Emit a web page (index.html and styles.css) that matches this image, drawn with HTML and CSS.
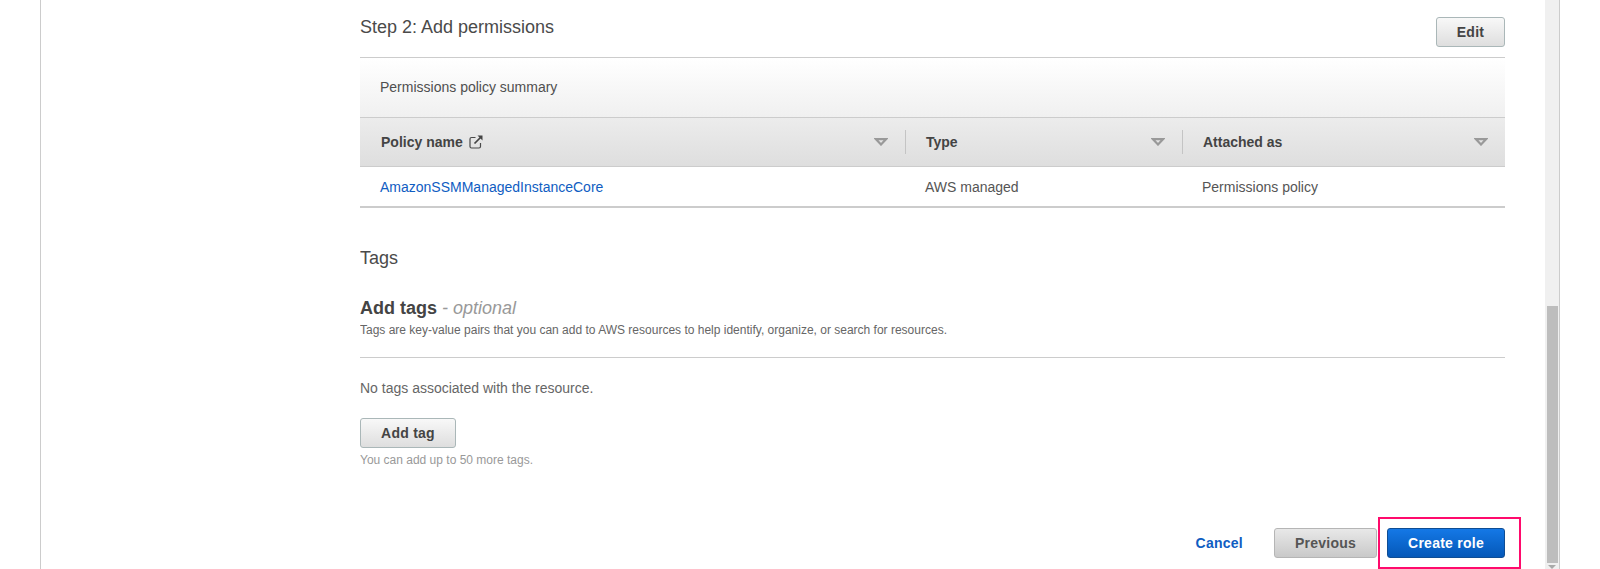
FILE: index.html
```html
<!DOCTYPE html>
<html lang="en">
<head>
<meta charset="utf-8">
<title>Create role</title>
<link rel="stylesheet" href="styles.css">
</head>
<body>
<div class="page">
  <main class="frame">
    <section class="content">
      <header class="step-head">
        <h2 class="step-title">Step 2: Add permissions</h2>
        <button class="btn btn-edit">Edit</button>
      </header>
      <div class="summary">Permissions policy summary</div>
      <div class="thead">
        <div class="th th-name">
          <span class="th-label">Policy name
            <svg class="ext" viewBox="0 0 14 14" width="14" height="14" aria-hidden="true"><path d="M6.500 2.500H2.500A1.500 1.500 0 0 0 1 4v7.500A1.500 1.500 0 0 0 2.500 13H10a1.500 1.500 0 0 0 1.500-1.500V8" fill="none" stroke="#4a4a4a" stroke-width="1.200"/><path d="M5.500 8.500 12 2" fill="none" stroke="#444" stroke-width="1.700"/><path d="M8.500 .5H13.500V5.500z" fill="#444"/></svg>
          </span>
          <svg class="caret" viewBox="0 0 14 8" width="14" height="8" aria-hidden="true"><path d="M1.800 1.100h10.400L7 6.500z" fill="none" stroke="#999" stroke-width="2.200"/></svg>
        </div>
        <div class="th th-type">
          <span class="th-label">Type</span>
          <svg class="caret" viewBox="0 0 14 8" width="14" height="8" aria-hidden="true"><path d="M1.800 1.100h10.400L7 6.500z" fill="none" stroke="#999" stroke-width="2.200"/></svg>
        </div>
        <div class="th th-attached">
          <span class="th-label">Attached as</span>
          <svg class="caret" viewBox="0 0 14 8" width="14" height="8" aria-hidden="true"><path d="M1.800 1.100h10.400L7 6.500z" fill="none" stroke="#999" stroke-width="2.200"/></svg>
        </div>
      </div>
      <div class="trow">
        <a class="td td-name link" href="#">AmazonSSMManagedInstanceCore</a>
        <div class="td td-type">AWS managed</div>
        <div class="td td-attached">Permissions policy</div>
      </div>

      <h2 class="tags-title">Tags</h2>
      <h3 class="add-title">Add tags <em class="optional">- optional</em></h3>
      <p class="desc">Tags are key-value pairs that you can add to AWS resources to help identify, organize, or search for resources.</p>
      <hr class="rule">
      <p class="none">No tags associated with the resource.</p>
      <button class="btn btn-add">Add tag</button>
      <p class="limit">You can add up to 50 more tags.</p>

      <footer class="actions">
        <a class="cancel" href="#">Cancel</a>
        <button class="btn btn-prev">Previous</button>
        <button class="btn btn-primary">Create role</button>
      </footer>
    </section>
    <div class="highlight"></div>
  </main>
  <aside class="scrollbar">
    <div class="thumb"></div>
    <svg class="arrow" viewBox="0 0 8 4" width="8" height="4" aria-hidden="true"><path d="M0 0h8L4 4z" fill="#a9a9a9"/></svg>
  </aside>
</div>
</body>
</html>
```
FILE: styles.css
```css
* { box-sizing: border-box; }
html, body { margin: 0; height: 569px; overflow: hidden; background: #fff; }
body { font-family: "Liberation Sans", Arial, sans-serif; font-size: 14px; color: #444; }

.page { display: flex; height: 569px; padding-left: 40px; }
.frame { position: relative; flex: 1; border-left: 1px solid #ccc; padding-left: 319px; padding-right: 40px; }
.content { height: 569px; overflow: hidden; }

.step-head { display: flex; justify-content: space-between; height: 57px; padding-top: 17px; }
.step-title { margin: 0; font-size: 18px; font-weight: 400; line-height: 21px; color: #4a4a4a; }

.btn { display: block; height: 30px; padding: 0; border: 1px solid #aab7b8; border-radius: 3px; font: 700 14px/28px "Liberation Sans", Arial, sans-serif; letter-spacing: .25px; color: #444; text-align: center; background: linear-gradient(#f8f8f8, #dedede); }
.btn-edit { width: 69px; }
.btn-add { width: 96px; }
.btn-prev { width: 103px; background: linear-gradient(#e8e8e8, #c9c9c9); border-color: #b5b5b5; color: #555; }
.btn-primary { width: 118px; margin-left: 10px; color: #fff; border-color: #0f4d94; background: linear-gradient(#1478e6, #0558b8); }

.summary { height: 61px; border-top: 1px solid #ccc; border-bottom: 1px solid #ccc; padding: 21px 20px 0; line-height: 17px; background: linear-gradient(#fff, #f0f0f0); color: #4f4f4f; }
.thead { display: grid; grid-template-columns: 546px 277px 1fr; align-items: center; height: 49px; border-bottom: 1px solid #ccc; background: linear-gradient(#ececec, #dedede); }
.th { position: relative; display: flex; justify-content: space-between; align-items: center; height: 24px; font-weight: 700; }
.th-label { display: flex; align-items: center; gap: 6px; }
.th-name { padding: 0 17px 0 21px; border-right: 1px solid #c4c4c4; }
.th-type { padding: 0 17px 0 20px; border-right: 1px solid #c4c4c4; }
.th-attached { padding: 0 17px 0 20px; }

.trow { display: grid; grid-template-columns: 545px 277px 1fr; align-items: center; height: 41px; border-bottom: 2px solid #ccc; }
.td { padding-left: 20px; }
.td-type, .td-attached { color: #555; }
.link { color: #0f5dc2; text-decoration: none; }

.tags-title { margin: 40px 0 0; font-size: 18px; font-weight: 400; line-height: 21px; color: #4a4a4a; }
.add-title { margin: 29px 0 0; font-size: 18px; font-weight: 700; line-height: 21px; color: #444; }
.optional { font-weight: 400; color: #999; }
.desc { margin: 4px 0 0; font-size: 12px; line-height: 14px; color: #666; }
.rule { height: 1px; margin: 20px 0 0; border: 0; background: #ccc; }
.none { margin: 22px 0 0; line-height: 17px; color: #666; }
.btn-add { margin-top: 21px; }
.limit { margin: 5px 0 0; font-size: 12px; line-height: 14px; color: #999; }

.actions { display: flex; justify-content: flex-end; align-items: center; margin-top: 61px; }
.cancel { margin-right: 31px; font-weight: 700; letter-spacing: .25px; color: #0f5dc2; text-decoration: none; }

.highlight { position: absolute; left: 1337px; top: 517px; width: 143px; height: 52px; border: 2px solid #ff0a6c; pointer-events: none; }

.scrollbar { position: relative; flex: 0 0 15px; width: 15px; background: #f0f0f0; border-right: 1px solid #ccc; padding: 306px 1px 0 2px; margin-right: 40px; }
.thumb { height: 257px; background: #bdbdbd; }
.arrow { position: absolute; left: 3px; bottom: 0; }
```
